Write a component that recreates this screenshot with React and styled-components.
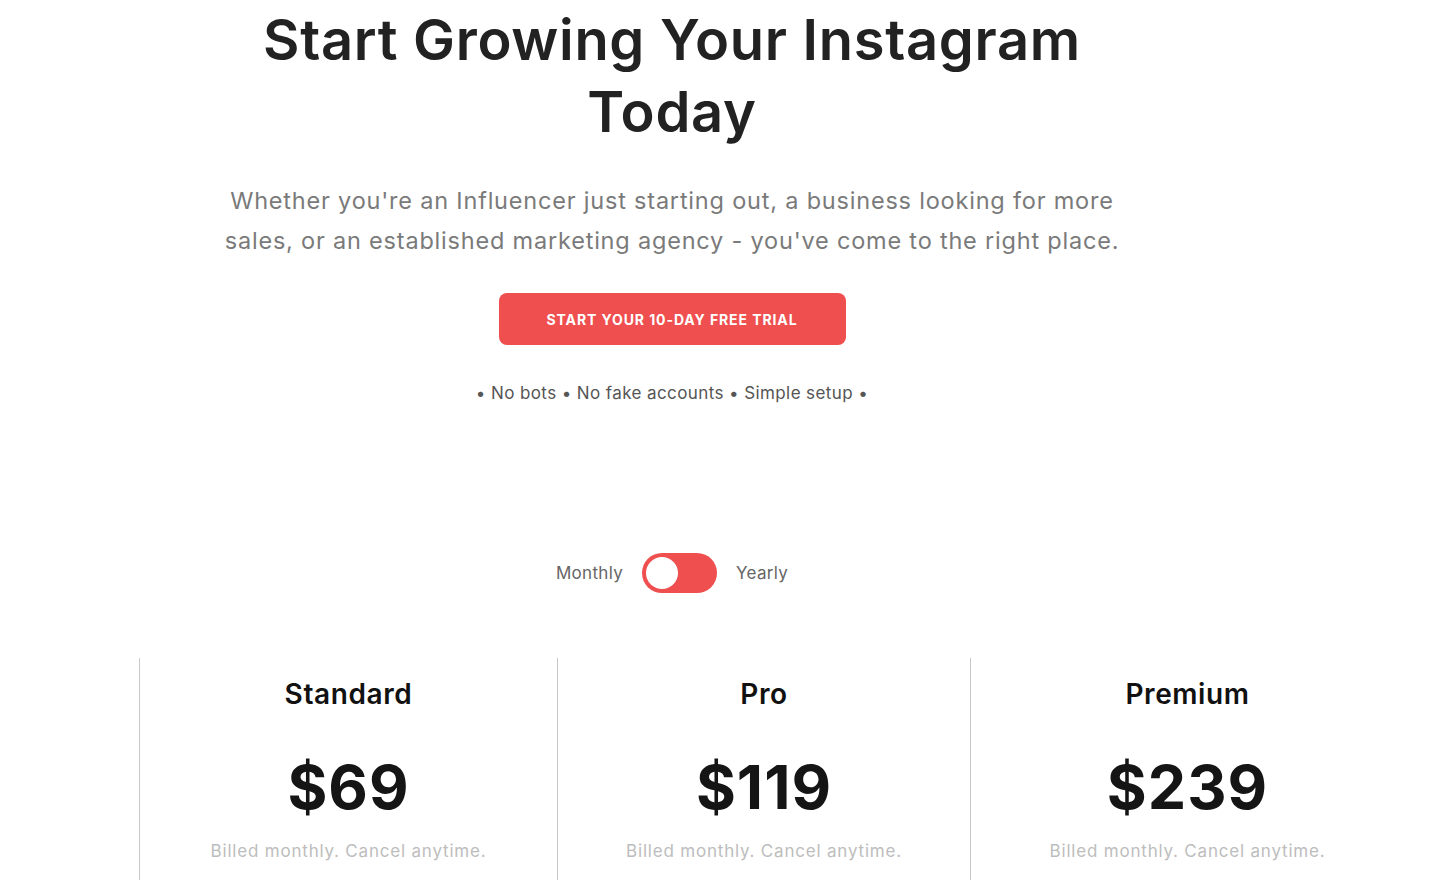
import React, { useState } from "react";
import styled, { createGlobalStyle } from "styled-components";

const GlobalStyle = createGlobalStyle`
  html, body {
    margin: 0;
    padding: 0;
    background: #fff;
  }
  body {
    font-family: "Inter", "Open Sans", sans-serif;
    overflow: hidden;
  }
`;

const plans = [
  { name: "Standard", price: "$69" },
  { name: "Pro", price: "$119" },
  { name: "Premium", price: "$239" },
];

const App = () => {
  const [yearly, setYearly] = useState(false);

  return (
    <Page>
      <GlobalStyle />
      <Hero>
        <Title>
          Start Growing Your Instagram
          <br />
          Today
        </Title>
        <Lead>
          Whether you're an Influencer just starting out, a business looking for more
          <br />
          sales, or an established marketing agency - you've come to the right place.
        </Lead>
        <TrialButton>Start your 10-day free trial</TrialButton>
        <Perks>• No bots • No fake accounts • Simple setup •</Perks>
      </Hero>

      <Toggle>
        <ToggleLabel>Monthly</ToggleLabel>
        <Switch $on={yearly} onClick={() => setYearly(!yearly)}>
          <Knob />
        </Switch>
        <ToggleLabel>Yearly</ToggleLabel>
      </Toggle>

      <Plans>
        {plans.map((plan) => (
          <Plan key={plan.name}>
            <PlanName>{plan.name}</PlanName>
            <Price>{plan.price}</Price>
            <Billed>Billed monthly. Cancel anytime.</Billed>
          </Plan>
        ))}
      </Plans>
    </Page>
  );
};

export default App;

const Page = styled.div`
  width: 1430px;
  height: 880px;
  overflow: hidden;
`;

const Hero = styled.section`
  width: 1344px;
  display: flex;
  flex-direction: column;
  align-items: center;
  text-align: center;
`;

const Title = styled.h1`
  margin: 4px 0 0;
  font-size: 56px;
  line-height: 72px;
  font-weight: 600;
  color: #222;
  letter-spacing: 0.7px;
`;

const Lead = styled.p`
  margin: 33px 0 0;
  font-size: 23.5px;
  line-height: 40px;
  font-weight: 400;
  color: #7a7a7a;
  letter-spacing: 0.8px;
`;

const TrialButton = styled.button`
  margin-top: 32px;
  width: 347px;
  height: 52px;
  border: none;
  border-radius: 8px;
  background: #ef4f4f;
  color: #fff;
  font-family: inherit;
  font-size: 14px;
  font-weight: 700;
  letter-spacing: 0.9px;
  text-transform: uppercase;
  cursor: pointer;
`;

const Perks = styled.p`
  margin: 38px 0 0;
  font-size: 17px;
  color: #555;
  letter-spacing: 0.4px;
`;

const Toggle = styled.div`
  width: 1344px;
  margin-top: 150px;
  display: flex;
  align-items: center;
  justify-content: center;
  gap: 19px;
`;

const ToggleLabel = styled.span`
  font-size: 17px;
  color: #666;
  letter-spacing: 0.3px;
`;

const Switch = styled.div`
  width: 75px;
  height: 40px;
  border-radius: 20px;
  background: #ef4f4f;
  display: flex;
  align-items: center;
  justify-content: ${(p) => (p.$on ? "flex-end" : "flex-start")};
  padding: 0 4px;
  box-sizing: border-box;
  cursor: pointer;
`;

const Knob = styled.div`
  width: 32px;
  height: 32px;
  border-radius: 50%;
  background: #fff;
`;

const Plans = styled.div`
  margin: 65px 0 0 139px;
  display: grid;
  grid-template-columns: 418px 413px 434px;
`;

const Plan = styled.div`
  border-left: 1.5px solid #c8c8c8;
  height: 260px;
  display: flex;
  flex-direction: column;
  align-items: center;
  padding-top: 18px;
`;

const PlanName = styled.h3`
  margin: 0;
  font-size: 28px;
  line-height: 36px;
  font-weight: 600;
  color: #111;
  letter-spacing: 0.6px;
`;

const Price = styled.div`
  margin-top: 40px;
  font-size: 61px;
  line-height: 70px;
  font-weight: 700;
  color: #151515;
  letter-spacing: 1px;
`;

const Billed = styled.p`
  margin: 19px 0 0;
  font-size: 17px;
  color: #bdbdbd;
  letter-spacing: 0.8px;
`;
